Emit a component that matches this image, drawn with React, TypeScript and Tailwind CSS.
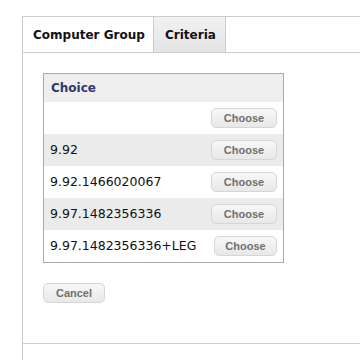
const rows = [
  { label: '', shade: false, btn: 'w-[66px]' },
  { label: '9.92', shade: true, btn: 'w-[66px]' },
  { label: '9.92.1466020067', shade: false, btn: 'w-[66px]' },
  { label: '9.97.1482356336', shade: true, btn: 'w-[66px]' },
  { label: '9.97.1482356336+LEG', shade: false, btn: 'w-[63px]' },
];

function GrayButton({ label, className }: { label: string; className?: string }) {
  return (
    <button
      className={`h-[20px] rounded-[5px] border border-[#d6d6d6] bg-gradient-to-b from-[#f7f7f7] to-[#e8e8e8] text-[11px] font-bold text-[#707070] font-['Liberation_Sans',sans-serif] leading-none ${className || ''}`}
    >
      {label}
    </button>
  );
}

export default function App() {
  return (
    <div className="w-[360px] h-[360px] bg-white overflow-hidden font-['DejaVu_Sans',sans-serif]">
      <div className="ml-[22px] mt-[16px] border-l border-t border-[#cccccc] h-[344px] flex flex-col">
        {/* tabs */}
        <div className="flex h-[36px] border-b border-[#cccccc] shrink-0">
          <div className="w-[130px] flex items-center pl-[10px] text-[12px] font-bold text-[#111]">
            Computer Group
          </div>
          <div className="w-[73px] flex items-center pl-[11px] border-l border-r border-[#cccccc] bg-gradient-to-b from-[#f2f2f2] to-[#e4e4e4] text-[12px] font-bold text-[#111]">
            Criteria
          </div>
        </div>

        <div className="pl-[20px] pt-[20px] pb-[40px] border-b border-[#cccccc]">
          <div className="w-[241px] border border-[#a9a9a9]">
            <div className="h-[28px] bg-[#eeeeee] flex items-center pl-[7px] text-[12px] font-bold text-[#2c3a6c]">
              Choice
            </div>
            {rows.map((r, i) => (
              <div
                key={i}
                className={`h-[32px] flex items-center justify-between pl-[6px] pr-[6px] ${
                  r.shade ? 'bg-[#ebebeb]' : 'bg-white'
                }`}
              >
                <span className="text-[12.5px] text-[#111]">{r.label}</span>
                <GrayButton label="Choose" className={r.btn} />
              </div>
            ))}
          </div>
          <div className="mt-[20px] flex">
            <GrayButton label="Cancel" className="w-[62px]" />
          </div>
        </div>
      </div>
    </div>
  );
}
